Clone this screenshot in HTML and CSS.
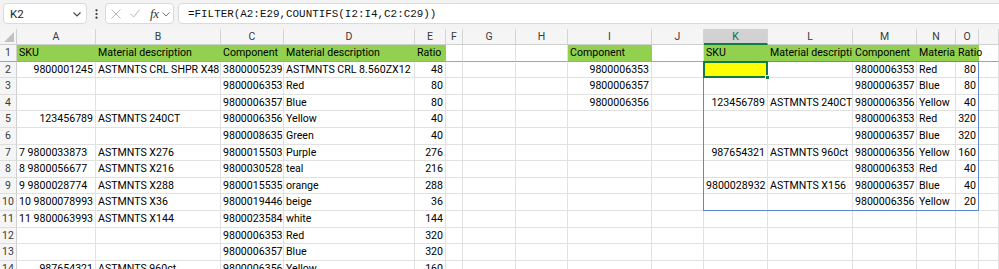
FILE: index.html
```html
<!DOCTYPE html>
<html>
<head>
<meta charset="utf-8">
<link rel="stylesheet" href="styles.css">
</head>
<body>
<div class="toolbar">
  <div class="namebox"><span>K2</span>
    <svg width="8" height="5" viewBox="0 0 8 5"><path d="M0.5 0.5 L4 4 L7.5 0.5" fill="none" stroke="#444" stroke-width="1.1"/></svg>
  </div>
  <div class="dots"><svg width="3" height="10" viewBox="0 0 3 10"><circle cx="1.5" cy="1.3" r="1.1" fill="#333"/><circle cx="1.5" cy="5" r="1.1" fill="#333"/><circle cx="1.5" cy="8.7" r="1.1" fill="#333"/></svg></div>
  <div class="fxbox">
    <svg class="x" width="10" height="10" viewBox="0 0 10 10"><path d="M0.5 0.5 L9.5 9.5 M9.5 0.5 L0.5 9.5" stroke="#b9b9b9" stroke-width="1"/></svg>
    <svg class="ck" width="10" height="9" viewBox="0 0 10 9"><path d="M0.5 4.8 L3.6 8 L9.5 0.6" fill="none" stroke="#b9b9b9" stroke-width="1"/></svg>
    <span class="fx">fx</span>
    <svg class="chev" width="8" height="5" viewBox="0 0 8 5"><path d="M0.5 0.5 L4 4 L7.5 0.5" fill="none" stroke="#777" stroke-width="1"/></svg>
  </div>
  <div class="formula">=FILTER(A2:E29,COUNTIFS(I2:I4,C2:C29))</div>
</div>

<div class="sheet">
  <div class="corner"><span class="tri"></span></div>
  <div class="h">A</div><div class="h">B</div><div class="h">C</div><div class="h">D</div><div class="h">E</div><div class="h">F</div><div class="h">G</div><div class="h">H</div><div class="h">I</div><div class="h">J</div><div class="h act">K</div><div class="h">L</div><div class="h">M</div><div class="h">N</div><div class="h">O</div><div class="h"></div>

  <div class="n f">1</div>
  <div class="c g f">SKU</div><div class="c g f">Material description</div><div class="c g f">Component</div><div class="c g f">Material description</div><div class="c g f">Ratio</div>
  <div class="c f"></div><div class="c f"></div><div class="c f"></div>
  <div class="c g f">Component</div><div class="c f"></div>
  <div class="c g f">SKU</div><div class="c g f">Material description</div><div class="c g f">Component</div><div class="c g f">Material description</div><div class="c g f ov">Ratio</div><div class="c f"></div>

  <div class="n nact">2</div>
  <div class="c r">9800001245</div><div class="c">ASTMNTS CRL SHPR X48</div><div class="c r">3800005239</div><div class="c">ASTMNTS CRL 8.560ZX12</div><div class="c r">48</div>
  <div class="c"></div><div class="c"></div><div class="c"></div><div class="c r">9800006353</div><div class="c"></div>
  <div class="c y"><span class="spill"></span><span class="active"><i class="handle"></i></span></div><div class="c"></div><div class="c r">9800006353</div><div class="c">Red</div><div class="c r">80</div><div class="c"></div>

  <div class="n">3</div>
  <div class="c"></div><div class="c"></div><div class="c r">9800006353</div><div class="c">Red</div><div class="c r">80</div>
  <div class="c"></div><div class="c"></div><div class="c"></div><div class="c r">9800006357</div><div class="c"></div>
  <div class="c"></div><div class="c"></div><div class="c r">9800006357</div><div class="c">Blue</div><div class="c r">80</div><div class="c"></div>

  <div class="n">4</div>
  <div class="c"></div><div class="c"></div><div class="c r">9800006357</div><div class="c">Blue</div><div class="c r">80</div>
  <div class="c"></div><div class="c"></div><div class="c"></div><div class="c r">9800006356</div><div class="c"></div>
  <div class="c r">123456789</div><div class="c">ASTMNTS 240CT</div><div class="c r">9800006356</div><div class="c">Yellow</div><div class="c r">40</div><div class="c"></div>

  <div class="n">5</div>
  <div class="c r">123456789</div><div class="c">ASTMNTS 240CT</div><div class="c r">9800006356</div><div class="c">Yellow</div><div class="c r">40</div>
  <div class="c"></div><div class="c"></div><div class="c"></div><div class="c"></div><div class="c"></div>
  <div class="c"></div><div class="c"></div><div class="c r">9800006353</div><div class="c">Red</div><div class="c r">320</div><div class="c"></div>

  <div class="n">6</div>
  <div class="c"></div><div class="c"></div><div class="c r">9800008635</div><div class="c">Green</div><div class="c r">40</div>
  <div class="c"></div><div class="c"></div><div class="c"></div><div class="c"></div><div class="c"></div>
  <div class="c"></div><div class="c"></div><div class="c r">9800006357</div><div class="c">Blue</div><div class="c r">320</div><div class="c"></div>

  <div class="n">7</div>
  <div class="c">7 9800033873</div><div class="c">ASTMNTS X276</div><div class="c r">9800015503</div><div class="c">Purple</div><div class="c r">276</div>
  <div class="c"></div><div class="c"></div><div class="c"></div><div class="c"></div><div class="c"></div>
  <div class="c r">987654321</div><div class="c">ASTMNTS 960ct</div><div class="c r">9800006356</div><div class="c">Yellow</div><div class="c r">160</div><div class="c"></div>

  <div class="n">8</div>
  <div class="c">8 9800056677</div><div class="c">ASTMNTS X216</div><div class="c r">9800030528</div><div class="c">teal</div><div class="c r">216</div>
  <div class="c"></div><div class="c"></div><div class="c"></div><div class="c"></div><div class="c"></div>
  <div class="c"></div><div class="c"></div><div class="c r">9800006353</div><div class="c">Red</div><div class="c r">40</div><div class="c"></div>

  <div class="n">9</div>
  <div class="c">9 9800028774</div><div class="c">ASTMNTS X288</div><div class="c r">9800015535</div><div class="c">orange</div><div class="c r">288</div>
  <div class="c"></div><div class="c"></div><div class="c"></div><div class="c"></div><div class="c"></div>
  <div class="c r">9800028932</div><div class="c">ASTMNTS X156</div><div class="c r">9800006357</div><div class="c">Blue</div><div class="c r">40</div><div class="c"></div>

  <div class="n">10</div>
  <div class="c">10 9800078993</div><div class="c">ASTMNTS X36</div><div class="c r">9800019446</div><div class="c">beige</div><div class="c r">36</div>
  <div class="c"></div><div class="c"></div><div class="c"></div><div class="c"></div><div class="c"></div>
  <div class="c"></div><div class="c"></div><div class="c r">9800006356</div><div class="c">Yellow</div><div class="c r">20</div><div class="c"></div>

  <div class="n">11</div>
  <div class="c">11 9800063993</div><div class="c">ASTMNTS X144</div><div class="c r">9800023584</div><div class="c">white</div><div class="c r">144</div>
  <div class="c"></div><div class="c"></div><div class="c"></div><div class="c"></div><div class="c"></div>
  <div class="c"></div><div class="c"></div><div class="c"></div><div class="c"></div><div class="c"></div><div class="c"></div>

  <div class="n">12</div>
  <div class="c"></div><div class="c"></div><div class="c r">9800006353</div><div class="c">Red</div><div class="c r">320</div>
  <div class="c"></div><div class="c"></div><div class="c"></div><div class="c"></div><div class="c"></div>
  <div class="c"></div><div class="c"></div><div class="c"></div><div class="c"></div><div class="c"></div><div class="c"></div>

  <div class="n">13</div>
  <div class="c"></div><div class="c"></div><div class="c r">9800006357</div><div class="c">Blue</div><div class="c r">320</div>
  <div class="c"></div><div class="c"></div><div class="c"></div><div class="c"></div><div class="c"></div>
  <div class="c"></div><div class="c"></div><div class="c"></div><div class="c"></div><div class="c"></div><div class="c"></div>

  <div class="n">14</div>
  <div class="c r">987654321</div><div class="c">ASTMNTS 960ct</div><div class="c r">9800006356</div><div class="c">Yellow</div><div class="c r">160</div>
  <div class="c"></div><div class="c"></div><div class="c"></div><div class="c"></div><div class="c"></div>
  <div class="c"></div><div class="c"></div><div class="c"></div><div class="c"></div><div class="c"></div><div class="c"></div>
</div>
</body>
</html>
```
FILE: styles.css
```css
* { box-sizing: border-box; }
html, body { margin: 0; padding: 0; }
body {
  width: 999px;
  height: 269px;
  overflow: hidden;
  background: #ffffff;
  font-family: Roboto, "Liberation Sans", sans-serif;
  color: #000;
}

/* ---------- formula bar ---------- */
.toolbar {
  display: flex;
  align-items: flex-start;
  height: 29px;
  padding: 3px 0 0 3px;
  background: #f3f3f3;
  overflow: hidden;
}
.namebox {
  width: 84px;
  height: 21px;
  border: 1px solid #dadada;
  border-radius: 4px;
  background: #fff;
  display: flex;
  align-items: center;
  justify-content: space-between;
  padding: 0 5px 0 6px;
  font-size: 11.5px;
  color: #222;
}
.namebox svg { margin-top: 1px; }
.dots {
  width: 18px;
  height: 21px;
  display: flex;
  align-items: center;
  justify-content: center;
}
.fxbox {
  width: 69px;
  height: 21px;
  border: 1px solid #dadada;
  border-radius: 4px;
  background: #fff;
  display: flex;
  align-items: center;
  padding-left: 5px;
}
.fxbox .x { margin-left: 0; }
.fxbox .ck { margin-left: 9px; }
.fxbox .fx {
  margin-left: 10px;
  font-family: "Liberation Serif", serif;
  font-style: italic;
  font-size: 13px;
  color: #333;
  letter-spacing: -0.3px;
}
.fxbox .chev { margin-left: 3px; margin-top: 1px; }
.formula {
  margin-left: 4px;
  flex: 1;
  margin-right: -12px;
  height: 21px;
  border: 1px solid #dadada;
  border-radius: 4px;
  background: #fff;
  display: flex;
  align-items: center;
  padding-left: 9px;
  font-family: "Liberation Mono", monospace;
  font-size: 10.9px;
  color: #111;
}

/* ---------- grid ---------- */
.sheet {
  display: grid;
  grid-template-columns: 17px 79px 125px 63px 131px 31px 17px 53px 52px 84px 52px 64px 85px 64px 39px 23px 1fr;
  grid-template-rows: 16px;
  grid-auto-rows: 16.6px;
  font-size: 10.6px;
}
.corner {
  position: relative;
  background: #f5f5f5;
  border-right: 1px solid #cfcfcf;
  border-bottom: 1px solid #cfcfcf;
}
.tri {
  position: absolute;
  right: 2px;
  bottom: 2px;
  width: 0;
  height: 0;
  border-left: 10px solid transparent;
  border-bottom: 10px solid #c2c2c2;
}
.h {
  background: #f5f5f5;
  border-right: 1px solid #d4d4d4;
  border-bottom: 1px solid #cfcfcf;
  text-align: center;
  font-size: 10.5px;
  line-height: 15px;
  color: #3a3a3a;
}
.h.act {
  background: #d2d2d2;
  border-bottom: 2px solid #107c41;
  color: #0e6b38;
}
.n {
  background: #f5f5f5;
  border-right: 1px solid #cfcfcf;
  border-bottom: 1px solid #dedede;
  text-align: center;
  font-size: 10.5px;
  line-height: 16px;
  color: #3a3a3a;
}
.c {
  border-right: 1px solid #e1e1e1;
  border-bottom: 1px solid #e1e1e1;
  padding: 0 2px;
  line-height: 16px;
  white-space: nowrap;
  overflow: hidden;
}
.r { text-align: right; }
.g { background: #92d050; border-right-color: #92d050; }
.f { border-bottom: 1px solid #a3a3a3; }
.ov { overflow: visible; position: relative; z-index: 2; }
.y { background: #ffff00; overflow: visible; position: relative; z-index: 3; }

/* spill range border + active cell overlays */
.spill {
  position: absolute;
  left: -1px;
  top: -1px;
  width: 276px;
  height: 150.4px;
  border: 1px solid #5b87d6;
  pointer-events: none;
}
.active {
  position: absolute;
  left: -1px;
  top: -1px;
  width: 65px;
  height: 17.6px;
  border: 2px solid #107c41;
}
.handle {
  position: absolute;
  right: -4px;
  bottom: -4px;
  width: 5px;
  height: 5px;
  background: #107c41;
  border: 1px solid #fff;
}
```
